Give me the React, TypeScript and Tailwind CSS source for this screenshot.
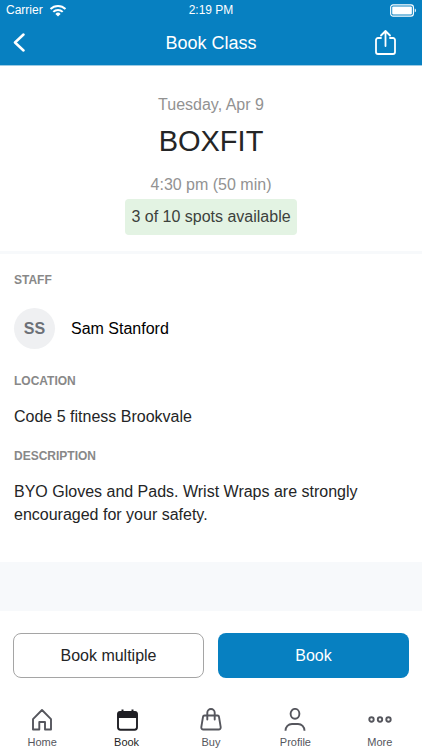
import React from 'react';

const HomeIcon = () => (
    <svg width="22" height="24" viewBox="0 0 22 24" fill="none" stroke="currentColor" strokeWidth="1.9" strokeLinejoin="round" aria-hidden="true">
        <path d="M2 11.2 11 2l9 9.200V21.500H14V14H8.300V21.500H2Z" />
    </svg>
);

const CalendarIcon = () => (
    <svg width="22" height="24" viewBox="0 0 22 24" fill="none" aria-hidden="true">
        <rect x="2" y="4" width="19" height="17.700" rx="2.400" stroke="currentColor" strokeWidth="1.9" />
        <path d="M1.500 10V6A2.500 2.500 0 0 1 4 3.500h15A2.500 2.500 0 0 1 21.500 6v4h-20Z" fill="currentColor" />
        <path d="M6.500 1.500v3M16.500 1.500v3" stroke="currentColor" strokeWidth="2" />
    </svg>
);

const BagIcon = () => (
    <svg width="22" height="24" viewBox="0 0 22 24" fill="none" stroke="currentColor" strokeWidth="1.9" strokeLinecap="round" strokeLinejoin="round" aria-hidden="true">
        <path d="M4.500 7.500h13a1.500 1.500 0 0 1 1.500 1.300l1.700 10.400a2 2 0 0 1-2 2.300H3.300a2 2 0 0 1-2-2.300L3 8.800A1.500 1.500 0 0 1 4.500 7.500Z" />
        <path d="M7.300 11.500V4.700a3.700 3.700 0 0 1 7.400 0v6.800" />
    </svg>
);

const ProfileIcon = () => (
    <svg width="22" height="24" viewBox="0 0 22 24" fill="none" stroke="currentColor" strokeWidth="1.9" aria-hidden="true">
        <ellipse cx="11" cy="5.800" rx="4.400" ry="4.900" />
        <path d="M1.500 22.800c0-4 2.800-6.800 6.500-6.800h6c3.700 0 6.500 2.800 6.500 6.800" />
    </svg>
);

const MoreIcon = () => (
    <svg width="24" height="24" viewBox="0 0 24 24" fill="none" stroke="currentColor" strokeWidth="1.9" aria-hidden="true">
        <circle cx="3.500" cy="11.500" r="2.200" />
        <circle cx="12" cy="11.500" r="2.200" />
        <circle cx="20.500" cy="11.500" r="2.200" />
    </svg>
);

const tabs = [
    { label: 'Home', icon: HomeIcon },
    { label: 'Book', icon: CalendarIcon, active: true },
    { label: 'Buy', icon: BagIcon },
    { label: 'Profile', icon: ProfileIcon },
    { label: 'More', icon: MoreIcon },
];

const App: React.FC = () => {
    return (
        <div className="flex min-h-screen flex-col bg-white font-['Liberation_Sans',Arial,sans-serif] text-[#242526]">
            <header className="border-b border-[#9ccbe4] bg-[#0780c1] text-white">
                <div className="grid h-5 grid-cols-3 items-center px-1.5 text-xs">
                    <div className="flex items-center gap-1.5">
                        <span>Carrier</span>
                        <svg width="18" height="13" viewBox="0 0 18 13" fill="none" stroke="currentColor" strokeWidth="2" aria-hidden="true">
                            <path d="M1.500 5a10.600 10.600 0 0 1 15 0M4.300 7.900a6.600 6.600 0 0 1 9.400 0" />
                            <path d="M9 12.500 6.400 9.900a3.700 3.700 0 0 1 5.200 0Z" fill="currentColor" stroke="none" />
                        </svg>
                    </div>
                    <span className="text-center">2:19 PM</span>
                    <svg className="justify-self-end" width="26" height="13" viewBox="0 0 27 13" fill="none" aria-hidden="true">
                        <rect x="0.700" y="0.700" width="23.600" height="11.600" rx="2.500" stroke="currentColor" strokeWidth="1.200" />
                        <rect x="2.300" y="2.300" width="20.400" height="8.400" rx="1" fill="currentColor" />
                        <path d="M25.700 4.500c1.600.6 1.600 3.400 0 4Z" fill="currentColor" />
                    </svg>
                </div>
                <div className="flex h-[45px] items-center justify-between px-3">
                    <button type="button" aria-label="Back" className="flex w-9 justify-start">
                        <svg width="14" height="20" viewBox="0 0 14 20" fill="none" stroke="currentColor" strokeWidth="2.500" strokeLinecap="round" strokeLinejoin="round" aria-hidden="true">
                            <path d="M11.500 1.500 3 9.500l8.500 8" />
                        </svg>
                    </button>
                    <h1 className="text-lg">Book Class</h1>
                    <button type="button" aria-label="Share" className="flex w-9 justify-start">
                        <svg width="22" height="26" viewBox="0 0 22 26" fill="none" stroke="currentColor" strokeWidth="1.800" strokeLinecap="round" strokeLinejoin="round" aria-hidden="true">
                            <path d="M7 8H4a2 2 0 0 0-2 2V22a2 2 0 0 0 2 2h15a2 2 0 0 0 2-2V10a2 2 0 0 0-2-2H16" />
                            <path d="M11.500 16V1.500M7 5.500 11.500 1 16 5.500" />
                        </svg>
                    </button>
                </div>
            </header>

            <main className="flex flex-1 flex-col">
                <section className="flex flex-col items-center border-b-3 border-[#f7f9fb] pt-[27px] pb-4">
                    <p className="text-base text-[#929292]">Tuesday, Apr 9</p>
                    <h2 className="mt-1 text-[29px] leading-10">BOXFIT</h2>
                    <p className="mt-3 text-base text-[#929292]">4:30 pm (50 min)</p>
                    <p className="mt-0.5 rounded-sm bg-[#e3f3e3] px-1.5 py-1 text-base leading-7 text-[#3c413c]">3 of 10 spots available</p>
                </section>

                <section className="px-3.5 pt-3.5 pb-9">
                    <h3 className="text-xs leading-6 font-bold text-[#888888]">STAFF</h3>
                    <div className="mt-4 flex items-center gap-4">
                        <span className="flex size-[41px] items-center justify-center rounded-full bg-[#eff0f2] text-base font-bold text-[#6c7077]">SS</span>
                        <span className="text-base text-black">Sam Stanford</span>
                    </div>
                    <h3 className="mt-5 text-xs leading-6 font-bold text-[#888888]">LOCATION</h3>
                    <p className="mt-3 text-base">Code 5 fitness Brookvale</p>
                    <h3 className="mt-[15px] text-xs leading-6 font-bold text-[#888888]">DESCRIPTION</h3>
                    <p className="mt-3 text-base leading-[23px]">BYO Gloves and Pads. Wrist Wraps are strongly encouraged for your safety.</p>
                </section>

                <div className="min-h-12 flex-1 bg-[#f7f9fb]" />
            </main>

            <footer>
                <div className="grid grid-cols-2 gap-3.5 px-[13px] pt-[22px] pb-[30px]">
                    <button type="button" className="h-[45px] rounded-lg border border-[#a5a5a5] text-base">Book multiple</button>
                    <button type="button" className="h-[45px] rounded-lg bg-[#0780c1] text-base text-white">Book</button>
                </div>
                <nav className="grid grid-cols-5">
                    {tabs.map(({ label, icon: Icon, active }) => (
                        <a
                            key={label}
                            href="#"
                            className={`flex flex-col items-center gap-0.5 text-[11px] leading-4 ${active ? 'text-[#1f1f24]' : 'text-[#55565d]'}`}
                        >
                            <Icon />
                            {label}
                        </a>
                    ))}
                </nav>
            </footer>
        </div>
    );
};

export default App;
